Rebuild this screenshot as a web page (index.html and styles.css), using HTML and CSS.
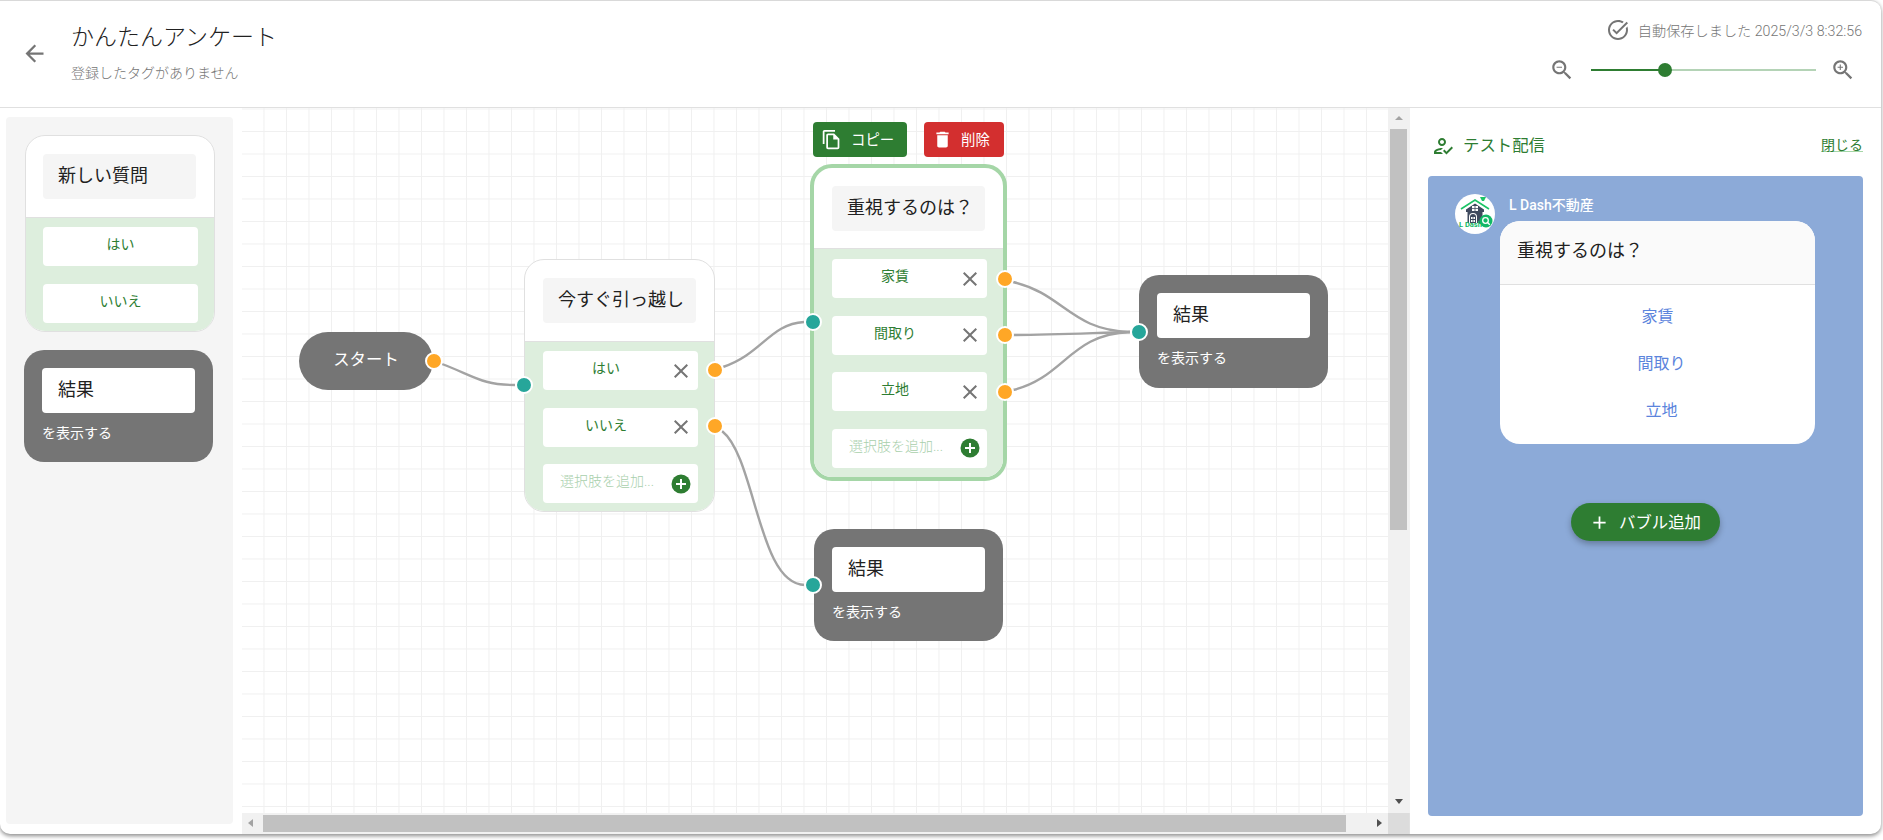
FILE: index.html
```html
<!DOCTYPE html>
<html lang="ja">
<head>
<meta charset="utf-8">
<title>かんたんアンケート</title>
<link rel="stylesheet" href="styles.css">
</head>
<body>
<div class="window">
  <header class="topbar">
    <svg class="icon back" viewBox="0 0 24 24"><path d="M20 11H7.83l5.59-5.59L12 4l-8 8 8 8 1.41-1.41L7.83 13H20v-2z"/></svg>
    <div class="titles">
      <div class="title">かんたんアンケート</div>
      <div class="subtitle">登録したタグがありません</div>
    </div>
    <div class="topright">
      <div class="saved">
        <svg class="icon" viewBox="0 0 24 24"><path d="M22 5.18 10.59 16.6l-4.24-4.24 1.41-1.41 2.83 2.83 10-10L22 5.18zm-2.21 5.04c.13.57.21 1.17.21 1.78 0 4.42-3.58 8-8 8s-8-3.58-8-8 3.58-8 8-8c1.58 0 3.04.46 4.28 1.25l1.44-1.44C16.1 2.67 14.13 2 12 2 6.48 2 2 6.48 2 12s4.48 10 10 10 10-4.48 10-10c0-1.19-.22-2.33-.6-3.39l-1.61 1.61z"/></svg>
        <span>自動保存しました 2025/3/3 8:32:56</span>
      </div>
      <div class="zoomrow">
        <svg class="icon zoomicon" viewBox="0 0 24 24"><path d="M15.5 14h-.79l-.28-.27C15.41 12.59 16 11.11 16 9.5 16 5.91 13.09 3 9.5 3S3 5.91 3 9.5 5.91 16 9.5 16c1.61 0 3.09-.59 4.23-1.57l.27.28v.79l5 4.99L20.49 19l-4.99-5zm-6 0C7.01 14 5 11.99 5 9.5S7.01 5 9.5 5 14 7.01 14 9.5 11.99 14 9.5 14zM7 9h5v1H7z"/></svg>
        <div class="slider"><div class="slider-fill"></div><div class="slider-thumb"></div></div>
        <svg class="icon zoomicon" viewBox="0 0 24 24"><path d="M15.5 14h-.79l-.28-.27C15.41 12.59 16 11.11 16 9.5 16 5.91 13.09 3 9.5 3S3 5.91 3 9.5 5.91 16 9.5 16c1.61 0 3.09-.59 4.23-1.57l.27.28v.79l5 4.99L20.49 19l-4.99-5zm-6 0C7.01 14 5 11.99 5 9.5S7.01 5 9.5 5 14 7.01 14 9.5 11.99 14 9.5 14zM12 10h-2v2H9v-2H7V9h2V7h1v2h2v1z"/></svg>
      </div>
    </div>
  </header>

  <main class="main">
    <aside class="palette">
      <div class="qnode">
        <div class="qhead"><div class="qinput">新しい質問</div></div>
        <div class="qbody qbody-short">
          <div class="opt"><span class="opt-text">はい</span></div>
          <div class="opt"><span class="opt-text">いいえ</span></div>
        </div>
      </div>
      <div class="rnode rnode-palette">
        <div class="rinput">結果</div>
        <div class="rlabel">を表示する</div>
      </div>
    </aside>

    <section class="board">
      <div class="canvas">
        <svg class="edges" viewBox="0 0 1146 705">
          <path d="M200 256 C 232 268, 240 277, 273 277"/>
          <path d="M481 259 C 520 246, 528 216, 562 214"/>
          <path d="M480 323 C 514 350, 516 477, 563 477"/>
          <path d="M771 174 C 822 186, 828 222, 888 224"/>
          <path d="M771 227 C 810 227, 850 225, 888 224"/>
          <path d="M771 282 C 822 270, 828 226, 888 224"/>
        </svg>

        <div class="startnode">スタート</div>

        <div class="qnode on-canvas n-a">
          <div class="qhead"><div class="qinput qinput-center">今すぐ引っ越し</div></div>
          <div class="qbody">
            <div class="opt"><span class="opt-text">はい</span><svg class="x" viewBox="0 0 24 24"><path d="M19 6.41 17.59 5 12 10.59 6.41 5 5 6.41 10.59 12 5 17.59 6.41 19 12 13.41 17.59 19 19 17.59 13.41 12z"/></svg></div>
            <div class="opt"><span class="opt-text">いいえ</span><svg class="x" viewBox="0 0 24 24"><path d="M19 6.41 17.59 5 12 10.59 6.41 5 5 6.41 10.59 12 5 17.59 6.41 19 12 13.41 17.59 19 19 17.59 13.41 12z"/></svg></div>
            <div class="opt opt-add"><span class="opt-ph">選択肢を追加...</span><svg class="addicon" viewBox="0 0 20 20"><circle cx="10" cy="10" r="9.5"/><path d="M9 5h2v4h4v2h-4v4H9v-4H5V9h4z"/></svg></div>
          </div>
        </div>

        <div class="actbtn act-copy">
          <svg class="icon-w" viewBox="0 0 24 24"><path d="M16 1H4c-1.1 0-2 .9-2 2v14h2V3h12V1zm-1 4H8c-1.1 0-1.99.9-1.99 2L6 21c0 1.1.89 2 1.99 2H19c1.1 0 2-.9 2-2V11l-6-6zM8 21V7h6v5h5v9H8z"/></svg>
          <span>コピー</span>
        </div>
        <div class="actbtn act-del">
          <svg class="icon-w" viewBox="0 0 24 24"><path d="M6 19c0 1.1.9 2 2 2h8c1.1 0 2-.9 2-2V7H6v12zM19 4h-3.5l-1-1h-5l-1 1H5v2h14V4z"/></svg>
          <span>削除</span>
        </div>

        <div class="qnode on-canvas n-b">
          <div class="qhead"><div class="qinput qinput-center">重視するのは？</div></div>
          <div class="qbody">
            <div class="opt"><span class="opt-text">家賃</span><svg class="x" viewBox="0 0 24 24"><path d="M19 6.41 17.59 5 12 10.59 6.41 5 5 6.41 10.59 12 5 17.59 6.41 19 12 13.41 17.59 19 19 17.59 13.41 12z"/></svg></div>
            <div class="opt"><span class="opt-text">間取り</span><svg class="x" viewBox="0 0 24 24"><path d="M19 6.41 17.59 5 12 10.59 6.41 5 5 6.41 10.59 12 5 17.59 6.41 19 12 13.41 17.59 19 19 17.59 13.41 12z"/></svg></div>
            <div class="opt"><span class="opt-text">立地</span><svg class="x" viewBox="0 0 24 24"><path d="M19 6.41 17.59 5 12 10.59 6.41 5 5 6.41 10.59 12 5 17.59 6.41 19 12 13.41 17.59 19 19 17.59 13.41 12z"/></svg></div>
            <div class="opt opt-add"><span class="opt-ph">選択肢を追加...</span><svg class="addicon" viewBox="0 0 20 20"><circle cx="10" cy="10" r="9.5"/><path d="M9 5h2v4h4v2h-4v4H9v-4H5V9h4z"/></svg></div>
          </div>
        </div>

        <div class="rnode on-canvas r-a"><div class="rinput">結果</div><div class="rlabel">を表示する</div></div>
        <div class="rnode on-canvas r-b"><div class="rinput">結果</div><div class="rlabel">を表示する</div></div>

        <span class="handle out h-start"></span>
        <span class="handle in h-a-in"></span>
        <span class="handle out h-a-1"></span>
        <span class="handle out h-a-2"></span>
        <span class="handle in h-b-in"></span>
        <span class="handle out h-b-1"></span>
        <span class="handle out h-b-2"></span>
        <span class="handle out h-b-3"></span>
        <span class="handle in h-ra"></span>
        <span class="handle in h-rb"></span>
      </div>

      <div class="vbar">
        <span class="arrow arrow-up"></span>
        <div class="vthumb"></div>
        <span class="arrow arrow-down"></span>
      </div>
      <div class="hbar">
        <span class="arrow arrow-left"></span>
        <div class="hthumb"></div>
        <span class="arrow arrow-right"></span>
      </div>
      <div class="corner"></div>
    </section>

    <aside class="preview">
      <div class="preview-head">
        <svg class="icon-g" viewBox="0 0 24 24"><path d="M11 12c2.21 0 4-1.79 4-4s-1.79-4-4-4-4 1.79-4 4 1.79 4 4 4zm0-6c1.1 0 2 .9 2 2s-.9 2-2 2-2-.9-2-2 .9-2 2-2zM5 18c.2-.63 2.57-1.68 4.96-1.94l2.04-2c-.39-.04-.68-.06-1-.06-2.67 0-8 1.34-8 4v2h9l-2-2H5zm15.6-5.5-5.13 5.17-2.07-2.08L12 17l3.47 3.5L22 13.91z"/></svg>
        <span class="preview-title">テスト配信</span>
        <a class="close-link">閉じる</a>
      </div>
      <div class="phone">
        <div class="msg">
          <svg class="avatar" viewBox="0 0 40 40">
            <circle cx="20" cy="20" r="20" fill="#fff"/>
            <path d="M6 15 20 6l14 9" fill="none" stroke="#1cc466" stroke-width="1.6"/>
            <path d="M25 3h6l-2 4h-2z" fill="#1cc466"/>
            <path d="M11 15.5 20 9.5l9 6V18h-1.5v11h-15V18H11z" fill="#3f4a5e"/>
            <path d="M17 12h6v5h-6z" fill="#fff"/>
            <path d="M19.6 12h.8v5h-.8zM17 14.2h6v.7h-6z" fill="#3f4a5e"/>
            <path d="M14 29v-6a4 4 0 0 1 8 0v6z" fill="#fff"/>
            <path d="M15 29v-6a3 3 0 0 1 6 0v6z" fill="#3f4a5e"/>
            <path d="M16 23h1.6v2H16zM18.4 23H20v2h-1.6zM16 26h1.6v2H16zM18.4 26H20v2h-1.6z" fill="#fff"/>
            <text x="4" y="33" class="avatar-text">L Dash</text>
            <circle cx="31" cy="27" r="6.5" fill="#12b866"/>
            <circle cx="30.5" cy="26.5" r="2.8" fill="none" stroke="#fff" stroke-width="1.3"/>
            <path d="m32.5 28.5 2.3 2.3" stroke="#fff" stroke-width="1.4"/>
          </svg>
          <div class="msg-col">
            <div class="msg-name">L Dash不動産</div>
            <div class="bubble">
              <div class="bubble-q">重視するのは？</div>
              <div class="bubble-opts">
                <div class="bubble-opt">家賃</div>
                <div class="bubble-opt bubble-opt-shift">間取り</div>
                <div class="bubble-opt bubble-opt-shift">立地</div>
              </div>
            </div>
          </div>
        </div>
        <div class="addbubble">
          <svg class="icon-w" viewBox="0 0 24 24"><path d="M19 13h-6v6h-2v-6H5v-2h6V5h2v6h6v2z"/></svg>
          <span>バブル追加</span>
        </div>
      </div>
    </aside>
  </main>
</div>
</body>
</html>
```

FILE: styles.css
```css
* { box-sizing: border-box; }
html, body { margin: 0; height: 100%; overflow: hidden; background: #fff; }
body {
  font-family: Roboto, "Noto Sans CJK JP", sans-serif;
  color: #212121;
  font-weight: 300;
}
svg { display: block; flex: none; }

.window {
  width: 1881px;
  height: 834px;
  display: flex;
  flex-direction: column;
  background: #fff;
  border-top: 1px solid #d9d9d9;
  border-radius: 0 10px 10px 10px;
  box-shadow: 0 2px 4px rgba(0, 0, 0, 0.45);
  overflow: hidden;
}

/* top bar */
.topbar {
  height: 107px;
  flex: none;
  display: flex;
  align-items: flex-start;
  border-bottom: 1px solid #e0e0e0;
  padding-left: 21px;
}
.icon { width: 24px; height: 24px; fill: #757575; }
.back { width: 27px; height: 27px; margin-top: 39px; margin-right: 23px; }
.titles { padding-top: 20px; }
.title { font-size: 23px; line-height: 34px; color: #212121; }
.subtitle { font-size: 14px; line-height: 20px; margin-top: 8px; color: #757575; }
.topright {
  margin-left: auto;
  padding: 17px 19px 0 0;
  display: flex;
  flex-direction: column;
  align-items: flex-end;
}
.saved { display: flex; align-items: center; gap: 8px; height: 24px; font-size: 14.2px; color: #757575; }
.saved span { padding-bottom: 1px; }
.zoomrow { display: flex; align-items: center; height: 24px; margin-top: 16px; margin-right: 6px; }
.zoomicon { width: 26px; height: 26px; }
.slider { position: relative; width: 225px; height: 2px; margin: 0 14px 0 16px; background: #b4d3b6; }
.slider-fill { width: 74px; height: 2px; background: #2e7d32; }
.slider-thumb {
  position: absolute;
  left: 67px;
  top: -6px;
  width: 14px;
  height: 14px;
  border-radius: 50%;
  background: #2e7d32;
}

.main { flex: 1; display: flex; min-height: 0; }

/* left palette */
.palette {
  width: 227px;
  flex: none;
  margin: 9px 9px 10px 6px;
  padding: 18px 19px;
  background: #f5f5f5;
  border-radius: 4px;
  display: flex;
  flex-direction: column;
  gap: 18.5px;
}

/* question node */
.qnode {
  width: 190px;
  border: 1px solid #e0e0e0;
  border-radius: 20px;
  background: #fff;
  overflow: hidden;
  flex: none;
}
.qhead { height: 82px; padding: 18px 17px; border-bottom: 1px solid #e0e0e0; }
.qinput {
  width: 153px;
  height: 45px;
  background: #f5f5f5;
  border-radius: 4px;
  padding-left: 15px;
  font-size: 18px;
  font-weight: 400;
  line-height: 43px;
  color: #212121;
  white-space: nowrap;
}
.qinput-center { text-align: center; padding-left: 3px; }
.qbody {
  background: #ddeedd;
  padding: 9px 17px 9px;
  display: flex;
  flex-direction: column;
  gap: 17.5px;
}
.qbody-short { padding-bottom: 8px; }
.opt {
  width: 155px;
  height: 39px;
  background: #fff;
  border-radius: 4px;
  display: flex;
  align-items: center;
  font-size: 14px;
  font-weight: 400;
  color: #2e7d32;
}
.opt-text { flex: 1; text-align: center; padding-bottom: 7px; }
.x { width: 24px; height: 24px; fill: #757575; margin-right: 5px; }
.opt-ph { flex: 1; padding: 0 0 7px 17px; color: #a9cfac; white-space: nowrap; font-weight: 300; }
.addicon { width: 20px; height: 20px; margin-right: 7px; }
.addicon circle { fill: #2e7d32; }
.addicon path { fill: #fff; }

/* result node */
.rnode {
  width: 189px;
  height: 112px;
  background: #757575;
  border-radius: 20px;
  padding: 18px;
  flex: none;
  margin-left: -1px;
}
.rinput {
  width: 153px;
  height: 45px;
  background: #fff;
  border-radius: 4px;
  padding-left: 16px;
  font-size: 18px;
  font-weight: 400;
  line-height: 43px;
  color: #212121;
}
.rlabel { margin-top: 9px; font-size: 14px; line-height: 22px; color: #fff; font-weight: 400; }

/* board */
.board {
  width: 1168px;
  flex: none;
  display: grid;
  grid-template-columns: 1146px 22px;
  grid-template-rows: 705px 21px;
}
.canvas {
  position: relative;
  overflow: hidden;
  background-color: #fff;
  background-image:
    linear-gradient(to right, #f0f0f0 1px, transparent 1px),
    linear-gradient(to bottom, #f0f0f0 1px, transparent 1px);
  background-size: 22.5px 22.5px;
  background-position: 21.5px 0.5px;
}
.edges { position: absolute; inset: 0; width: 1146px; height: 705px; }
.edges path { fill: none; stroke: #a3a3a3; stroke-width: 2.4; }

.on-canvas { position: absolute; margin: 0; }
.startnode {
  position: absolute;
  left: 57px;
  top: 224px;
  width: 134px;
  height: 58px;
  border-radius: 29px;
  background: #757575;
  color: #fff;
  font-size: 16.4px;
  font-weight: 400;
  line-height: 55px;
  text-align: center;
}
.n-a { left: 282px; top: 151px; width: 191px; height: 253px; }
.n-a .qhead { padding-left: 18px; }
.n-a .qbody { padding-left: 18px; height: 171px; }
.n-b {
  left: 568px;
  top: 56px;
  width: 197px;
  height: 317px;
  border: 4px solid #a5d6a7;
  border-radius: 22px;
}
.n-b .qhead { height: 81px; padding: 18px; }
.n-b .qbody { padding: 10px 18px 9px; height: 228px; }
.r-a { left: 897px; top: 167px; height: 113px; }
.r-b { left: 572px; top: 421px; }

.actbtn {
  position: absolute;
  top: 14px;
  height: 35px;
  border-radius: 4px;
  display: flex;
  align-items: center;
  color: #fff;
  font-size: 14.4px;
  font-weight: 400;
}
.actbtn span { padding-bottom: 3px; }
.act-copy { left: 571px; width: 94px; background: #2e7d32; padding-left: 8px; gap: 9px; }
.act-del { left: 682px; width: 80px; background: #d32f2f; padding-left: 8px; gap: 8px; }
.icon-w { width: 21px; height: 21px; fill: #fff; }

.handle {
  position: absolute;
  width: 18px;
  height: 18px;
  margin: -9px 0 0 -9px;
  border-radius: 50%;
  border: 2px solid #fff;
}
.handle.out { background: #ffa726; }
.handle.in { background: #26a69a; }
.h-start { left: 191.5px; top: 253px; }
.h-a-in { left: 281.5px; top: 277px; }
.h-a-1 { left: 473px; top: 262px; }
.h-a-2 { left: 473px; top: 318px; }
.h-b-in { left: 570.5px; top: 214px; }
.h-b-1 { left: 762.5px; top: 171px; }
.h-b-2 { left: 762.5px; top: 227px; }
.h-b-3 { left: 762.5px; top: 284px; }
.h-ra { left: 896.5px; top: 224px; }
.h-rb { left: 571px; top: 477px; }

/* scrollbars */
.vbar { background: #f1f1f1; position: relative; padding: 21px 3px 0 2px; }
.vthumb { width: 17px; height: 401px; background: #c1c1c1; }
.hbar { background: #f1f1f1; position: relative; padding: 2px 0 0 21px; }
.hthumb { width: 1083px; height: 17px; background: #c1c1c1; }
.corner { background: #dcdcdc; }
.arrow { position: absolute; width: 0; height: 0; border-style: solid; border-color: transparent; }
.arrow-up { left: 7px; top: 8px; border-width: 0 4px 4px; border-bottom-color: #a3a3a3; }
.arrow-down { left: 7px; bottom: 9px; border-width: 5px 4px 0; border-top-color: #505050; }
.arrow-left { left: 6px; top: 6px; border-width: 4px 5px 4px 0; border-right-color: #a3a3a3; }
.arrow-right { right: 6px; top: 6px; border-width: 4px 0 4px 5px; border-left-color: #505050; }

/* preview */
.preview {
  flex: 1;
  min-width: 0;
  border-left: 1px solid #e0e0e0;
  margin-left: -1px;
  padding: 0 18px 18px;
  display: flex;
  flex-direction: column;
}
.preview-head { height: 68px; flex: none; display: flex; align-items: center; color: #2e7d32; padding-top: 7px; font-weight: 400; }
.icon-g { width: 24px; height: 24px; fill: #2e7d32; margin-left: 3px; }
.preview-title { margin-left: 8px; font-size: 16.4px; padding-bottom: 3px; }
.close-link { margin-left: auto; font-size: 14px; text-decoration: underline; text-decoration-color: #a5d6a7; text-underline-offset: 1px; padding-bottom: 3px; }
.phone {
  flex: 1;
  background: #8caad8;
  border-radius: 4px;
  padding-top: 18px;
  display: flex;
  flex-direction: column;
}
.msg { display: flex; padding-left: 27px; }
.avatar { width: 40px; height: 40px; }
.avatar-text { font-size: 7.5px; font-weight: 700; fill: #12b866; font-family: Roboto, sans-serif; }
.msg-col { margin-left: 5px; }
.msg-name { font-size: 14px; font-weight: 500; line-height: 23px; height: 27px; color: #fff; padding-left: 9px; }
.bubble { width: 315px; height: 223px; background: #fff; border-radius: 20px; overflow: hidden; }
.bubble-q {
  height: 64px;
  background: #fafafa;
  border-bottom: 1px solid #e0e0e0;
  padding-left: 17px;
  font-size: 18px;
  font-weight: 400;
  line-height: 60px;
  color: #212121;
}
.bubble-opts { padding: 8px 0; }
.bubble-opt { height: 47px; line-height: 47px; text-align: center; font-size: 16px; font-weight: 400; color: #5b84dc; }
.bubble-opt-shift { padding-left: 8px; }
.addbubble {
  align-self: center;
  margin-top: 59px;
  width: 149px;
  height: 38px;
  border-radius: 19px;
  background: #2e7d32;
  color: #fff;
  font-size: 16.4px;
  font-weight: 400;
  display: flex;
  align-items: center;
  padding-left: 18px;
  gap: 9px;
  box-shadow: 0 3px 6px rgba(0, 0, 0, 0.28);
}
.addbubble span { padding-bottom: 3px; }
```
